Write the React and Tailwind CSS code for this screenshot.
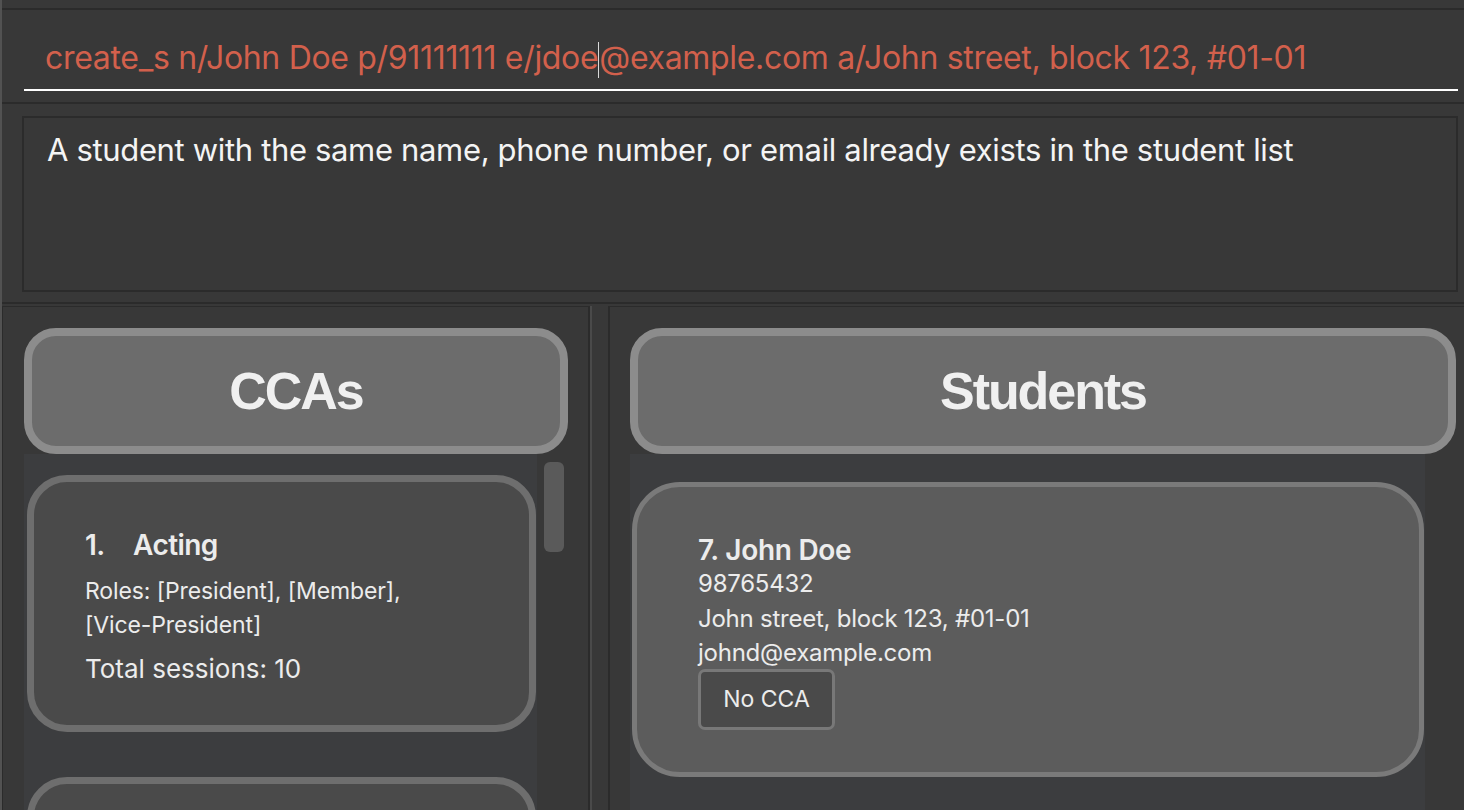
const UI = { fontFamily: "Inter, 'Noto Sans', sans-serif" };
const HEAD = { fontFamily: "'Liberation Sans', Arial, sans-serif" };

function PanelHeader({ title, width }) {
  return (
    <div
      className={`${width} h-[126px] shrink-0 rounded-[32px] border-[8px] border-[#8c8c8c] bg-[#6c6c6c] flex items-center justify-center`}
    >
      <span
        style={HEAD}
        className="text-[52px] font-bold tracking-[-0.04em] text-[#f0f0f0] leading-none"
      >
        {title}
      </span>
    </div>
  );
}

function CcaCard({ children }) {
  return (
    <div className="ml-[3px] w-[509px] h-[257px] shrink-0 rounded-[40px] border-[7px] border-[#6e6e6e] bg-[#4a4a4a] pl-[51px] pt-[45px] text-[#ececec]">
      {children}
    </div>
  );
}

function StudentCard() {
  return (
    <div className="ml-[2px] mt-[28px] w-[792px] h-[295px] shrink-0 rounded-[48px] border-[5px] border-[#7a7a7a] bg-[#5c5c5c] pl-[61px] pt-[46px] text-[#ececec]">
      <div className="text-[28px] font-semibold tracking-[-0.01em] leading-[34px]">
        7. John Doe
      </div>
      <div className="text-[24px] leading-[34.5px] tracking-[-0.01em]">
        <div>98765432</div>
        <div>John street, block 123, #01-01</div>
        <div>johnd@example.com</div>
      </div>
      <div className="-mt-[2px] inline-flex h-[61px] w-[137px] items-center justify-center rounded-[7px] border-[3px] border-[#787878] bg-[#4a4a4a] text-[23px]">
        No CCA
      </div>
    </div>
  );
}

export default function App() {
  return (
    <div
      style={UI}
      className="w-[1464px] h-[810px] overflow-hidden bg-[#383838] border-l-2 border-[#525252] flex flex-col"
    >
      {/* command box */}
      <div className="h-[8px] shrink-0" />
      <div className="h-[2px] shrink-0 bg-[#2b2b2b]" />
      <div className="h-[92px] shrink-0 pl-[22px]">
        <div className="w-[1434px] h-[81px] border-b-2 border-white flex items-center pl-[21px] pt-[16px]">
          <span className="text-[32px] text-[#d2604c] tracking-[-0.01em] whitespace-nowrap leading-none">
            create_s n/John Doe p/91111111 e/jdoe
            <span className="inline-block w-[1px] h-[36px] bg-[#d8d8d8] align-middle -my-2" />
            @example.com a/John street, block 123, #01-01
          </span>
        </div>
      </div>
      <div className="h-[2px] shrink-0 bg-[#2b2b2b]" />

      {/* result box */}
      <div className="h-[198px] shrink-0 pt-[12px] pl-[20px]">
        <div className="w-[1436px] h-[176px] border-2 border-[#2b2b2b] pl-[23px] pt-[10px]">
          <span className="text-[31px] text-[#f4f4f4] tracking-[-0.011em] whitespace-nowrap leading-[44px]">
            A student with the same name, phone number, or email already exists in the student list
          </span>
        </div>
      </div>
      <div className="h-[2px] shrink-0 bg-[#2b2b2b]" />
      <div className="h-[2px] shrink-0" />

      {/* panels */}
      <div className="flex-1 flex min-h-0">
        {/* CCA panel */}
        <div className="w-[588px] shrink-0 border-l border-t border-r-2 border-[#2b2b2b] pl-[21px] pt-[21px] flex flex-col">
          <PanelHeader title="CCAs" width="w-[544px]" />
          <div className="flex flex-1 min-h-0">
            <div className="w-[513px] bg-[#3c3d3f] flex flex-col pt-[21px] gap-[45px] overflow-hidden">
              <CcaCard>
                <div className="flex items-center text-[28px] font-semibold tracking-[-0.02em] leading-[36px]">
                  <span className="w-[48px]">1.</span>
                  <span>Acting</span>
                </div>
                <div className="mt-[11px] text-[23px] leading-[34px] tracking-[-0.005em]">
                  Roles: [President], [Member],
                  <br />
                  [Vice-President]
                </div>
                <div className="mt-[9px] text-[26px] leading-[36px]">
                  Total sessions: 10
                </div>
              </CcaCard>
              <CcaCard />
            </div>
            <div className="flex-1 pl-[7px] pt-[8px]">
              <div className="w-[20px] h-[90px] rounded-[6px] bg-[#5a5a5a]" />
            </div>
          </div>
        </div>
        <div className="w-[2px] shrink-0 bg-[#4a4a4a]" />
        <div className="w-[16px] shrink-0" />

        {/* Students panel */}
        <div className="flex-1 border-l-2 border-t border-[#2b2b2b] pl-[20px] pt-[21px] flex flex-col">
          <PanelHeader title="Students" width="w-[826px]" />
          <div className="w-[795px] flex-1 bg-[#3c3d3f] flex flex-col">
            <StudentCard />
          </div>
        </div>
      </div>
    </div>
  );
}
